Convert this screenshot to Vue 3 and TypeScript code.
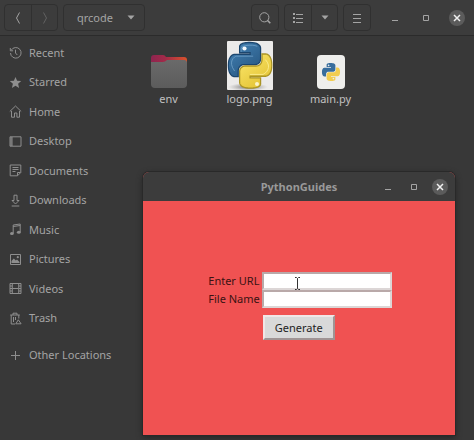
<script setup lang="ts">
import { ref } from 'vue'

type Place = { name: string; icon: string }

const places: Place[] = [
  { name: 'Recent', icon: 'M2.2 4.2A5.3 5.3 0 1 1 1.5 7M1.3 2v2.8h2.8M6.5 3.7V7l1.8 2' },
  { name: 'Starred', icon: 'star' },
  { name: 'Home', icon: 'M.8 6.5 6.5 1l5.7 5.5M2.5 6v6.2h3V8h2.4v4.2h2.6V6' },
  { name: 'Desktop', icon: 'M1 1.8h11v9.4H1zM3 2v9M2 2v9' },
  { name: 'Documents', icon: 'M1.2 1h10.6v7.5l-3.3 3.3H1.2zM3.5 3.5h6M3.5 5.5h6M3.5 7.5h3M11.5 8.5H8.5v3' },
  { name: 'Downloads', icon: 'M5 1.2h3v5.3h2L6.5 10 3 6.5h2zM2.7 12h7.6' },
  { name: 'Music', icon: 'music' },
  { name: 'Pictures', icon: 'pictures' },
  { name: 'Videos', icon: 'M1 1.5h11v10H1zM3.3 1.5v10M9.7 1.5v10M3.5 6.5h6M1 4h2M1 6.5h2M1 9h2M10 4h2M10 6.5h2M10 9h2' },
  { name: 'Trash', icon: 'M1.2 3h9.6M4 3V1.2h4V3M2.2 3v9h4M9.8 3v3.5M4.5 5v5M6.5 5v3M9.3 7.8l2.8 4H6.8z' },
]

const snake =
  'M14.25.18l.9.2.73.26.59.3.45.32.34.34.25.34.16.33.1.3.04.26.02.2-.01.13V8.5l-.05.63-.13.55-.21.46-.26.38-.3.31-.33.25-.35.19-.35.14-.33.1-.3.07-.26.04-.21.02H8.77l-.69.05-.59.14-.5.22-.41.27-.33.32-.27.35-.2.36-.15.37-.1.35-.07.32-.04.27-.02.21v3.06H3.17l-.21-.03-.28-.07-.32-.12-.35-.18-.36-.26-.36-.36-.35-.46-.32-.59-.28-.73-.21-.88-.14-1.05-.05-1.23.06-1.22.16-1.04.24-.87.32-.71.36-.57.4-.44.42-.33.42-.24.4-.16.36-.1.32-.05.24-.01h.16l.06.01h8.16v-.83H6.18l-.01-2.75-.02-.37.05-.34.11-.31.17-.28.25-.26.31-.23.38-.2.44-.18.51-.15.58-.12.64-.1.71-.06.77-.04.84-.02 1.27.05z'

const url = ref('')
const fileName = ref('')
</script>

<template>
  <div class="files">
    <header class="bar">
      <div class="group">
        <button class="tool" aria-label="Back">
          <svg width="8" height="14" viewBox="0 0 8 14"><path d="M5.5 1.5 2.5 7l3 5.5" /></svg>
        </button>
        <button class="tool dim" aria-label="Forward">
          <svg width="8" height="14" viewBox="0 0 8 14"><path d="m2.5 1.5 3 5.5-3 5.5" /></svg>
        </button>
      </div>
      <button class="path">
        <span>qrcode</span>
        <svg width="8" height="5" viewBox="0 0 8 5"><path class="solid" d="M.5.5h7L4 4.5z" /></svg>
      </button>
      <div class="tools">
        <div class="group">
          <button class="tool" aria-label="Search">
            <svg width="14" height="14" viewBox="0 0 14 14"><circle cx="6.3" cy="6.3" r="4.6" /><path d="m9.3 9.3 3 3" stroke-width="1.6" /></svg>
          </button>
        </div>
        <div class="group">
          <button class="tool" aria-label="List view">
            <svg width="12" height="12" viewBox="0 0 12 12"><path class="solid" d="M1 1h2v2H1zM1 5h2v2H1zM1 9h2v2H1z" /><path d="M4 2.5h7M4 6.5h7M4 10.5h7" /></svg>
          </button>
          <button class="tool" aria-label="View options">
            <svg width="8" height="5" viewBox="0 0 8 5"><path class="solid" d="M.5.5h7L4 4.5z" /></svg>
          </button>
        </div>
        <div class="group">
          <button class="tool" aria-label="Menu">
            <svg width="10" height="10" viewBox="0 0 10 10"><path d="M1 1.5h8M1 5.5h8M1 9.5h8" /></svg>
          </button>
        </div>
      </div>
      <div class="controls">
        <button class="control" aria-label="Minimize"><svg width="8" height="8" viewBox="0 0 8 8"><path d="M1 6.5h6" /></svg></button>
        <button class="control" aria-label="Maximize"><svg width="8" height="8" viewBox="0 0 8 8"><path d="M1.5 1.5h5v5h-5z" /></svg></button>
        <button class="control close" aria-label="Close"><svg width="8" height="8" viewBox="0 0 8 8"><path d="m1 1 6 6M7 1 1 7" /></svg></button>
      </div>
    </header>

    <div class="content">
      <nav class="side">
        <div class="places">
          <a v-for="p in places" :key="p.name" href="#" class="place">
            <svg width="13" height="13" viewBox="0 0 13 13">
              <path v-if="p.icon === 'star'" class="solid" d="m6.5 1 1.6 3.8 4.1.3-3.1 2.7 1 4.1-3.6-2.2-3.6 2.2 1-4.1L.8 5.1l4.1-.3z" />
              <g v-else-if="p.icon === 'music'">
                <path d="M4.2 10V2l7-1v8M4.2 3.5l7-1" />
                <ellipse class="solid" cx="2.9" cy="10.6" rx="1.9" ry="1.5" /><ellipse class="solid" cx="9.8" cy="9.3" rx="1.9" ry="1.5" />
              </g>
              <g v-else-if="p.icon === 'pictures'">
                <path d="M1.5 1.5h10v10h-10z" />
                <path class="solid" d="M2.5 10V8l2.3-2.5 2 2 1.2-1 2.5 2.5v1z" /><circle class="solid" cx="8.8" cy="4.2" r="1.1" />
              </g>
              <path v-else :d="p.icon" />
            </svg>
            <span>{{ p.name }}</span>
          </a>
        </div>
        <a href="#" class="place other">
          <svg width="13" height="13" viewBox="0 0 13 13"><path d="M6.5 2v9M2 6.5h9" /></svg>
          <span>Other Locations</span>
        </a>
      </nav>

      <main class="items">
        <figure class="item">
          <svg class="thumb" width="48" height="50" viewBox="0 0 48 50">
            <defs>
              <linearGradient id="tab"><stop offset="0" stop-color="#8e2550" /><stop offset=".4" stop-color="#a32a48" /><stop offset="1" stop-color="#d9532c" /></linearGradient>
              <linearGradient id="front" x2="0" y2="1"><stop offset="0" stop-color="#6a6a6a" /><stop offset="1" stop-color="#5c5c5c" /></linearGradient>
            </defs>
            <path fill="url(#tab)" stroke="none" d="M6 17q0-3 3-3h9q2 0 3 2h18q3 0 3 3v6H6z" />
            <path fill="url(#front)" stroke="none" d="M6 21h12q2 0 4-2h17q3 0 3 3v21q0 4-4 4H10q-4 0-4-4z" />
          </svg>
          <figcaption>env</figcaption>
        </figure>
        <figure class="item">
          <svg class="thumb" width="48" height="50" viewBox="0 0 48 50">
            <defs>
              <linearGradient id="blue" x2=".7" y2="1"><stop offset="0" stop-color="#4484b8" /><stop offset="1" stop-color="#285781" /></linearGradient>
              <linearGradient id="gold" x2=".7" y2="1"><stop offset="0" stop-color="#dfbd2c" /><stop offset="1" stop-color="#f9e365" /></linearGradient>
              <radialGradient id="shade"><stop offset="0" stop-color="#444" stop-opacity=".8" /><stop offset="1" stop-color="#888" stop-opacity="0" /></radialGradient>
            </defs>
            <rect x="1" width="46" height="49" rx="1" fill="#ecebea" stroke="none" />
            <ellipse cx="22" cy="46" rx="20" ry="4" fill="url(#shade)" stroke="none" />
            <g transform="translate(2.5 1.5) scale(1.8 1.9)">
              <path :d="snake" fill="url(#blue)" stroke="#1c466e" stroke-width=".7" />
              <path :d="snake" transform="rotate(180 12 12)" fill="url(#gold)" stroke="#aa9425" stroke-width=".7" />
              <path d="M3.4 15c-4-5 0-7.8 1-7.8h9.3M7 5V3.2C7 1.5 13 .8 16 2" fill="none" stroke="#7faed2" stroke-width=".35" />
              <path d="M12 16.8h7.5M20.5 9c4 4 0 7.5-1 7.5" fill="none" stroke="#fff4a0" stroke-width=".4" />
            </g>
            <circle cx="18.5" cy="7.5" r="2.1" fill="#f3f8fc" stroke="none" /><circle cx="31" cy="43" r="2" fill="#fbf4ca" stroke="none" />
          </svg>
          <figcaption>logo.png</figcaption>
        </figure>
        <figure class="item">
          <svg class="thumb" width="48" height="50" viewBox="0 0 48 50">
            <rect x="10" y="14" width="28" height="34" rx="4" fill="#eeeeec" stroke="none" />
            <g transform="translate(15 22) scale(.75)">
              <path :d="snake" fill="#386d9c" stroke="none" />
              <path :d="snake" transform="rotate(180 12 12)" fill="#f2cd50" stroke="none" />
              <circle cx="8.8" cy="3.2" r="1.1" fill="#eee" stroke="none" /><circle cx="15.2" cy="20.8" r="1.1" fill="#eee" stroke="none" />
            </g>
          </svg>
          <figcaption>main.py</figcaption>
        </figure>
      </main>
    </div>

    <section class="dialog">
      <header class="title">
        <h1>PythonGuides</h1>
        <div class="controls">
          <button class="control" aria-label="Minimize"><svg width="8" height="8" viewBox="0 0 8 8"><path d="M1 6.5h6" /></svg></button>
          <button class="control" aria-label="Maximize"><svg width="8" height="8" viewBox="0 0 8 8"><path d="M1.5 1.5h5v5h-5z" /></svg></button>
          <button class="control close" aria-label="Close"><svg width="8" height="8" viewBox="0 0 8 8"><path d="m1 1 6 6M7 1 1 7" /></svg></button>
        </div>
      </header>
      <form class="form" @submit.prevent>
        <label for="url">Enter URL</label>
        <input id="url" v-model="url" type="text" />
        <label for="file">File Name</label>
        <input id="file" v-model="fileName" type="text" />
        <button class="generate">Generate</button>
      </form>
      <svg class="caret" width="7" height="13" viewBox="0 0 7 13"><path d="M1 .5h1.5l1 1 1-1H6M3.5 1.5v10M1 12.5h1.5l1-1 1 1H6" /></svg>
    </section>
  </div>
</template>

<style>
body {
  margin: 0;
  background: #383838;
}
</style>

<style scoped>
.files {
  position: relative;
  min-height: 100vh;
  box-sizing: border-box;
  overflow: hidden;
  background: #383838;
  color: #a4a4a4;
  font: 11px/16px "Noto Sans", "Open Sans", sans-serif;
}
button {
  margin: 0;
  padding: 0;
  border: 0;
  background: none;
  color: inherit;
  font: inherit;
}
svg {
  display: block;
  flex: none;
  fill: none;
  stroke: currentColor;
}
.solid {
  fill: currentColor;
  stroke: none;
}
.bar {
  display: flex;
  align-items: center;
  height: 36px;
  padding: 0 4px;
  box-sizing: border-box;
  background: #3c3c3c;
  border-bottom: 1px solid #2b2b2b;
}
.group,
.path {
  display: flex;
  align-items: center;
  height: 27px;
  box-sizing: border-box;
  border: 1px solid #303030;
  border-radius: 4px;
}
.tool {
  display: grid;
  place-items: center;
  width: 26px;
  height: 100%;
}
.tool + .tool {
  border-left: 1px solid #303030;
}
.dim {
  color: #626262;
}
.path {
  gap: 14px;
  margin-left: 5px;
  padding: 0 9px 0 13px;
}
.tools {
  display: flex;
  gap: 5px;
  margin-left: auto;
}
.controls {
  display: flex;
  gap: 10px;
}
.bar .controls {
  gap: 15px;
  margin: 0 5px 0 16px;
}
.control {
  display: grid;
  place-items: center;
  width: 16px;
  height: 16px;
  border-radius: 50%;
}
.close {
  background: #5b5b5b;
  color: #f0f0f0;
}
.close svg {
  stroke-width: 1.5;
}
.content {
  display: flex;
}
.side {
  flex: none;
  width: 128px;
  padding-top: 2px;
}
.places {
  display: grid;
  grid-auto-rows: 1fr;
  height: 295px;
}
.place {
  display: flex;
  align-items: center;
  gap: 7px;
  padding-left: 9px;
  color: inherit;
  text-decoration: none;
}
.place svg {
  color: #8e8e8e;
}
.other {
  margin-top: 7px;
  height: 30px;
}
.items {
  display: flex;
  padding-top: 5px;
}
.item {
  display: flex;
  flex-direction: column;
  align-items: center;
  width: 81px;
  margin: 0;
  color: #c0c0c0;
}
.dialog {
  position: absolute;
  left: 143px;
  right: 19px;
  top: 172px;
  bottom: 5px;
  display: flex;
  flex-direction: column;
  border-radius: 6px 6px 0 0;
  background: #f05252;
  box-shadow: 0 0 0 1px #292929, 0 2px 6px #222;
}
.title {
  display: grid;
  grid-template-columns: 1fr auto 1fr;
  align-items: center;
  height: 29px;
  padding: 0 7px;
  border-radius: 6px 6px 0 0;
  background: #3c3c3c;
}
.title h1 {
  grid-column: 2;
  margin: 0;
  font-size: 11px;
  font-weight: 700;
  color: #999;
}
.title .controls {
  justify-self: end;
}
.form {
  display: grid;
  grid-template-columns: auto 130px;
  grid-template-rows: 18px 18px auto;
  column-gap: 2px;
  justify-content: center;
  align-items: center;
  padding: 71px 0 0 2px;
  color: #3a1212;
}
.form input {
  width: 100%;
  height: 18px;
  box-sizing: border-box;
  padding: 0 2px;
  border: 2px solid;
  border-color: #b9a9a9 #dcd6d6 #dcd6d6 #b9a9a9;
  border-radius: 0;
  background: #fff;
  font: inherit;
  outline: 0;
}
.generate {
  grid-column: 2;
  justify-self: start;
  height: 25px;
  margin: 7px 0 0 1px;
  padding: 0 10px;
  border: 2px solid;
  border-color: #f0e6e6 #a09494 #a09494 #f0e6e6;
  background: #d9d9d9;
  color: #222;
}
.caret {
  position: absolute;
  left: 151px;
  top: 105px;
  color: #333;
}
</style>
